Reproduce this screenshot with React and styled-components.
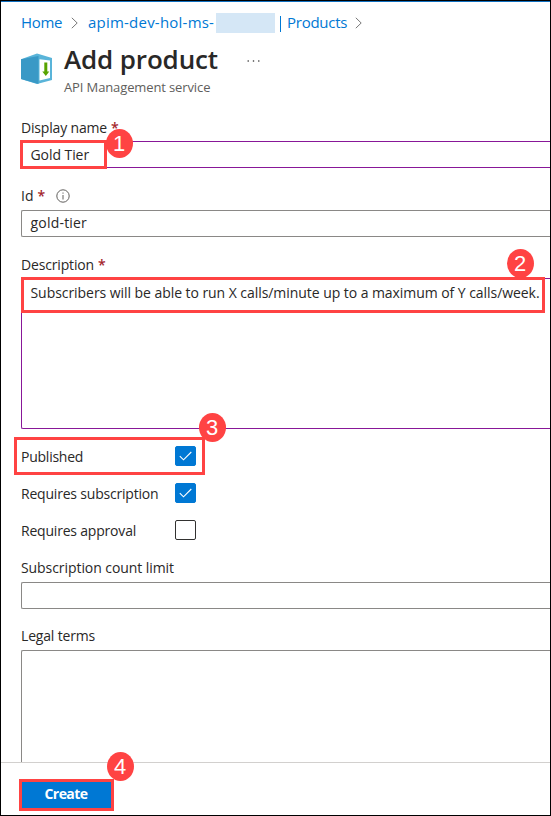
import React from 'react';
import styled, { createGlobalStyle } from 'styled-components';

const Global = createGlobalStyle`
  * { box-sizing: border-box; }
  body { margin: 0; background: #fff; }
`;

const Frame = styled.div`
  display: flex;
  flex-direction: column;
  width: 551px;
  height: 816px;
  overflow: hidden;
  border: 1px solid #000;
  background: #fff;
  color: #292827;
  font-family: 'Open Sans', 'Noto Sans', sans-serif;
  font-size: 14px;
  line-height: 20px;
`;

const TopLine = styled.div`
  flex: none;
  height: 1px;
  background: #0f6fc0;
`;

const Text = styled.span`
  white-space: nowrap;
  letter-spacing: ${(p) => p.$ls || 0}px;
`;

const Breadcrumb = styled.nav`
  display: flex;
  flex: none;
  align-items: center;
  height: 21px;
  margin-top: 10px;
  padding-left: 20px;
  color: #0078d4;
  font-size: 15px;
`;

const Crumb = styled(Text)`
  width: ${(p) => p.$width}px;
  padding-bottom: 2px;
`;

const Redacted = styled.span`
  width: 59px;
  height: 20px;
  margin: 0 5px 0 2px;
  background: #d5e7f6;
`;

const Divider = styled.span`
  width: 1px;
  height: 16px;
  margin: 2px 6px 0 0;
  background: #0078d4;
`;

const Chevron = styled.svg`
  flex: none;
  width: 7px;
  height: 12px;
  margin: 0 ${(p) => p.$gap + 1}px 0 ${(p) => p.$gap - 1}px;
  fill: none;
  stroke: #777;
`;

const Header = styled.header`
  display: flex;
  flex: none;
  height: 64px;
  margin-top: 10px;
  padding-left: 20px;
`;

const ProductIcon = styled.svg`
  width: 31px;
  height: 32px;
  margin: 10px 12px 0 0;
`;

const Title = styled.h1`
  margin: -1px 0 0;
  font-size: 26px;
  font-weight: 600;
  line-height: 34px;
`;

const Subtitle = styled.div`
  margin-top: 2px;
  color: #605e5c;
  font-size: 13px;
  line-height: 18px;
`;

const More = styled.svg`
  width: 13px;
  height: 4px;
  margin: 16px 0 0 29px;
  fill: #333;
`;

const Form = styled.main`
  display: flex;
  flex: 1;
  flex-direction: column;
  min-height: 0;
  overflow: hidden;
  padding: 10px 0 0 20px;
`;

const Field = styled.div`
  position: relative;
  flex: none;
  height: ${(p) => p.$height}px;
`;

const Label = styled.label`
  display: flex;
  align-items: center;
  height: ${(p) => p.$height || 24}px;
  padding: ${(p) => p.$drop || 0}px 0 ${(p) => p.$lift ?? 2}px;
`;

const Required = styled.span`
  margin-left: 4px;
  color: #a4262c;
  font-weight: 600;
`;

const InfoIcon = styled.svg`
  width: 14px;
  height: 14px;
  margin-left: 11px;
  fill: none;
  stroke: #605e5c;
`;

const Control = styled.div`
  height: ${(p) => p.$height || 27}px;
  padding: ${(p) => p.$top || 3}px 0 0 8.5px;
  border: 1px solid ${(p) => (p.$edited ? '#881798' : '#8a8886')};
  border-right: 0;
  border-radius: 2px 0 0 2px;
  line-height: 20px;
`;

const CheckRow = styled.div`
  position: relative;
  display: flex;
  flex: none;
  align-items: center;
  height: 37px;
`;

const CheckLabel = styled.span`
  width: 154px;
`;

const Checkbox = styled.span`
  display: flex;
  align-items: center;
  justify-content: center;
  width: 21px;
  height: 20px;
  margin-top: -1px;
  border: 1px solid ${(p) => (p.$checked ? '#0078d4' : '#323130')};
  border-radius: 2px;
  background: ${(p) => (p.$checked ? '#0078d4' : '#fff')};
`;

const Footer = styled.footer`
  display: flex;
  flex: none;
  align-items: flex-start;
  height: 53px;
  padding: 17px 0 0 18px;
  border-top: 1px solid #d2d0ce;
`;

const ButtonSlot = styled.div`
  position: relative;
  padding: 2px 3px 3px;
`;

const CreateButton = styled.button`
  display: flex;
  align-items: center;
  justify-content: center;
  width: 90px;
  height: 27px;
  padding: 0 2px 5px 0;
  border: 0;
  background: #0078d4;
  color: #fff;
  font: 700 14px 'Open Sans', 'Noto Sans', sans-serif;
`;

const Highlight = styled.span`
  position: absolute;
  left: ${(p) => p.$x}px;
  top: ${(p) => p.$y}px;
  width: ${(p) => p.$w}px;
  height: ${(p) => p.$h}px;
  border: 3px solid #ff4343;
  pointer-events: none;
`;

const Badge = styled.span`
  position: absolute;
  z-index: 1;
  left: ${(p) => p.$x}px;
  top: ${(p) => p.$y}px;
  display: flex;
  align-items: center;
  justify-content: center;
  width: 27px;
  height: 29px;
  border-radius: 50%;
  background: #ff4343;
  color: #fff;
  font: 22px/29px 'Liberation Sans', Arial, sans-serif;
`;

const Separator = ({ gap }) => (
  <Chevron $gap={gap} viewBox="0 0 7 12">
    <path d="M.8 .8 6.2 6 .8 11.2" />
  </Chevron>
);

const CheckMark = () => (
  <svg width="13" height="10" viewBox="0 0 13 10" fill="none" stroke="#fff" strokeWidth="1.1">
    <path d="M.8 5.2 4.5 8.8 12.3 1" />
  </svg>
);

const CheckItem = ({ label, ls, checked, children }) => (
  <CheckRow>
    <CheckLabel><Text $ls={ls}>{label}</Text></CheckLabel>
    <Checkbox $checked={checked}>{checked && <CheckMark />}</Checkbox>
    {children}
  </CheckRow>
);

export default function App() {
  return (
    <Frame>
      <Global />
      <TopLine />
      <Breadcrumb>
        <Crumb $width={42} $ls={-0.3}>Home</Crumb>
        <Separator gap={9} />
        <Crumb $width={126} $ls={0.22}>apim-dev-hol-ms-</Crumb>
        <Redacted />
        <Divider />
        <Crumb $width={60} $ls={-0.25}>Products</Crumb>
        <Separator gap={9} />
      </Breadcrumb>
      <Header>
        <ProductIcon viewBox="0 0 31 32">
          <path d="M0 6.2 16 .5 31 5V27L16 31 0 26Z" fill="#59b4d9" />
          <path d="M0 6.2 17.5 3V31L0 26Z" fill="#3999c6" />
          <path d="M18.5 6.2 29 7.5V25L18.5 27.5Z" fill="#fff" />
          <path d="M23.3 9.5h3v9h2L24.8 23l-3.5-4.5h2Z" fill="#57a300" />
        </ProductIcon>
        <div>
          <Title><Text $ls={-0.14}>Add product</Text></Title>
          <Subtitle><Text $ls={-0.12}>API Management service</Text></Subtitle>
        </div>
        <More viewBox="0 0 13 4">
          <circle cx="1.2" cy="2" r=".8" />
          <circle cx="6.5" cy="2" r=".8" />
          <circle cx="11.8" cy="2" r=".8" />
        </More>
      </Header>
      <Form>
        <Field $height={69}>
          <Label><Text $ls={-0.17}>Display name</Text><Required>*</Required></Label>
          <Control $edited><Text $ls={-0.07}>Gold Tier</Text></Control>
          <Highlight $x={-1} $y={23} $w={87} $h={29} />
          <Badge $x={84.5} $y={12}>1</Badge>
        </Field>
        <Field $height={69}>
          <Label $lift={4}>
            <Text>Id</Text><Required>*</Required>
            <InfoIcon viewBox="0 0 14 14">
              <circle cx="7" cy="7" r="6.2" />
              <path d="M7 6v4.5M7 3.5v1.2" />
            </InfoIcon>
          </Label>
          <Control $top={2}><Text $ls={0.2}>gold-tier</Text></Control>
        </Field>
        <Field $height={183}>
          <Label $height={23} $lift={4}><Text $ls={-0.16}>Description</Text><Required>*</Required></Label>
          <Control $edited $height={151} $top={4}>
            <Text $ls={-0.056}>
              Subscribers will be able to run X calls/minute up to a maximum of Y calls/week.
            </Text>
          </Control>
          <Highlight $x={0} $y={22} $w={524} $h={36} />
          <Badge $x={485.5} $y={-6}>2</Badge>
        </Field>
        <CheckItem label="Published" ls={-0.24} checked>
          <Highlight $x={-7} $y={-1} $w={191} $h={38} />
          <Badge $x={177.5} $y={-25}>3</Badge>
        </CheckItem>
        <CheckItem label="Requires subscription" ls={-0.2} checked />
        <CheckItem label="Requires approval" ls={-0.2} />
        <Field $height={68}>
          <Label $height={33} $drop={4} $lift={0}><Text $ls={-0.07}>Subscription count limit</Text></Label>
          <Control />
        </Field>
        <Field $height={150}>
          <Label $height={33} $drop={4} $lift={0}><Text $ls={-0.17}>Legal terms</Text></Label>
          <Control $height={140} />
        </Field>
      </Form>
      <Footer>
        <ButtonSlot>
          <CreateButton type="button"><Text $ls={-0.55}>Create</Text></CreateButton>
          <Highlight $x={0} $y={-1} $w={95} $h={32} />
          <Badge $x={87.5} $y={-28}>4</Badge>
        </ButtonSlot>
      </Footer>
    </Frame>
  );
}
